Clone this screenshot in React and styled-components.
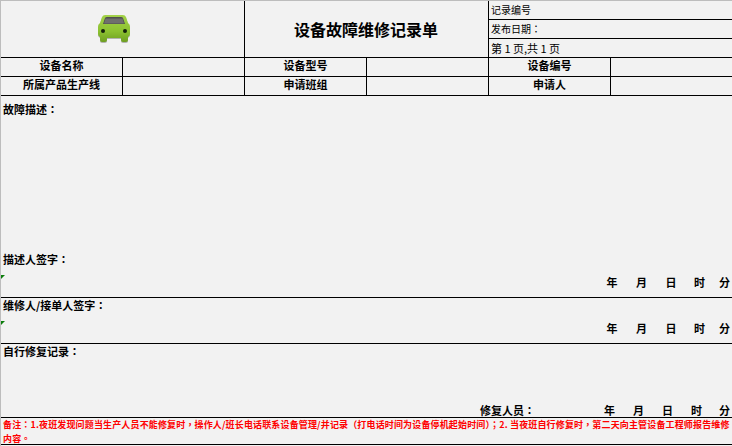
import React from 'react'
import styled, { createGlobalStyle } from 'styled-components'

const Global = createGlobalStyle`
html, body { margin: 0; padding: 0; background: #f2f2f2; }
body { font-family: "Noto Sans CJK SC", "Liberation Sans", sans-serif; color: #000; }
`

const Sheet = styled.div`
position: relative;
width: 732px;
height: 446px;
box-sizing: border-box;
overflow: hidden;
background: #f2f2f2;
border-top: 1px solid #bdbdbd;
border-left: 1px solid #bdbdbd;
display: flex;
flex-direction: column;
`

const Head = styled.div`
display: grid;
grid-template-columns: repeat(5, 122px) 121px;
grid-template-rows: 57px 19px 19px;
flex: none;
`

const Cell = styled.div`
box-sizing: border-box;
display: flex;
align-items: center;
justify-content: center;
padding-bottom: 3px;
border-bottom: 1px solid #000;
border-right: ${p => (p.$last ? 'none' : '1px solid #000')};
font-size: 11px;
font-weight: 700;
line-height: 1;
white-space: nowrap;
`

const LogoCell = styled(Cell)`
grid-column: span 2;
padding: 0 17px 1px 0;
`

const TitleCell = styled(Cell)`
grid-column: span 2;
padding: 0 1px 0 0;
font-size: 16px;
`

const MetaCell = styled.div`
grid-column: span 2;
display: grid;
grid-template-rows: 19px 19px 19px;
border-bottom: 1px solid #000;
box-sizing: border-box;
`

const MetaRow = styled.div`
box-sizing: border-box;
display: flex;
align-items: center;
padding-left: 2px;
font-size: ${p => (p.$big ? '11px' : '10px')};
line-height: 1;
white-space: pre;
border-bottom: ${p => (p.$last ? 'none' : '1px solid #000')};
`

const Section = styled.section`
box-sizing: border-box;
height: ${p => p.$h}px;
flex: none;
display: flex;
flex-direction: column;
justify-content: space-between;
padding: ${p => p.$pt || 0}px 2px ${p => p.$pb || 0}px 2px;
border-bottom: 1px solid #000;
`

const Label = styled.div`
font-size: 11px;
font-weight: 700;
line-height: 14px;
height: 14px;
white-space: nowrap;
`

const SignBlock = styled.div`
display: flex;
flex-direction: column;
gap: 9px;
`

const DateRow = styled.div`
display: flex;
justify-content: flex-end;
align-items: center;
font-size: 11px;
font-weight: 700;
line-height: 14px;
height: 14px;
`

const DatePart = styled.span`
display: block;
margin-left: ${p => p.$gap}px;
`

const Repairer = styled.span`
margin-right: 69px;
`

// full-width marks sit in the middle of their box in the reference
const Punct = styled.span`
font-family: "Noto Sans CJK TC", "Noto Sans CJK SC", sans-serif;
`

const Note = styled.div`
box-sizing: border-box;
height: 27px;
flex: none;
width: 731px;
padding: 0 0 0 2px;
font-family: "Noto Sans CJK TC", "Noto Sans CJK SC", sans-serif;
font-size: 9px;
font-weight: 700;
line-height: 14px;
color: #ff0000;
border-bottom: 1px solid #000;
letter-spacing: 0.15px;
`

const ScrollMark = styled.div`
position: absolute;
left: -1px;
top: 190px;
width: 1px;
height: 31px;
background: #2fa83a;
`

const Corner = styled.div`
position: absolute;
left: 0;
top: ${p => p.$top}px;
width: 0;
height: 0;
border-top: 4px solid #0a7d0a;
border-right: 4px solid transparent;
`

const CarWrap = styled.svg`
display: block;
filter: blur(0.4px);
`

const Car = () => (
  <CarWrap width="34" height="31" viewBox="-1 -1 34 31">
    <defs>
      <linearGradient id="carBody" x1="0" y1="0" x2="0" y2="1">
        <stop offset="0" stopColor="#a4d24a" />
        <stop offset="0.6" stopColor="#8cc230" />
        <stop offset="1" stopColor="#6f9f22" />
      </linearGradient>
    </defs>
    <path d="M7 1 h18 q2 0 3 2 l2 6 q2 1 2 4 v7 q0 2-2 3 v3 q0 2-2 2 h-3 q-2 0-2-2 v-2 H9 v2 q0 2-2 2 h-3 q-2 0-2-2 v-3 q-2-1-2-3 v-7 q0-3 2-4 l2-6 q1-2 3-2 z" fill="#7c8078" opacity=".55" transform="translate(0 1)" />
    <path d="M7 1 h18 q2 0 3 2 l2 6 q2 1 2 4 v7 q0 2-2 3 v3 q0 2-2 2 h-3 q-2 0-2-2 v-2 H9 v2 q0 2-2 2 h-3 q-2 0-2-2 v-3 q-2-1-2-3 v-7 q0-3 2-4 l2-6 q1-2 3-2 z" fill="url(#carBody)" />
    <path d="M5 10 l2-6 q.5-1 2-1 h14 q1.500 0 2 1 l2 6 z" fill="#4f4f4d" />
    <path d="M6 9.500 l1.500-5 h17 l1.500 5 z" fill="#6f6f6d" />
    <circle cx="5" cy="17" r="2" fill="#14200a" />
    <circle cx="27" cy="17" r="2" fill="#14200a" />
  </CarWrap>
)

const Txt = ({ children }) => (
  <>
    {children.split(/([：])/).map((s, i) =>
      i % 2 ? <Punct key={i}>{s}</Punct> : s
    )}
  </>
)

const signGaps = [0, 18.5, 18.5, 17.5, 14]
const repairGaps = [0, 18, 18, 18, 17]

const Dates = ({ gaps }) => (
  <>
    {['年', '月', '日', '时', '分'].map((t, i) => (
      <DatePart key={t} $gap={gaps[i]}>{t}</DatePart>
    ))}
  </>
)

const App = () => (
  <>
    <Global />
    <Sheet>
      <Head>
        <LogoCell><Car /></LogoCell>
        <TitleCell>设备故障维修记录单</TitleCell>
        <MetaCell>
          <MetaRow>记录编号</MetaRow>
          <MetaRow><Txt>发布日期：</Txt></MetaRow>
          <MetaRow $big $last>第 1 页,共 1 页</MetaRow>
        </MetaCell>
        <Cell>设备名称</Cell>
        <Cell />
        <Cell>设备型号</Cell>
        <Cell />
        <Cell>设备编号</Cell>
        <Cell $last />
        <Cell>所属产品生产线</Cell>
        <Cell />
        <Cell>申请班组</Cell>
        <Cell />
        <Cell>申请人</Cell>
        <Cell $last />
      </Head>
      <Section $h={202} $pt={6} $pb={8}>
        <Label><Txt>故障描述：</Txt></Label>
        <SignBlock>
          <Label><Txt>描述人签字：</Txt></Label>
          <DateRow><Dates gaps={signGaps} /></DateRow>
        </SignBlock>
      </Section>
      <Section $h={46} $pb={8}>
        <Label><Txt>维修人/接单人签字：</Txt></Label>
        <DateRow><Dates gaps={signGaps} /></DateRow>
      </Section>
      <Section $h={74}>
        <Label><Txt>自行修复记录：</Txt></Label>
        <DateRow>
          <Repairer><Txt>修复人员：</Txt></Repairer>
          <Dates gaps={repairGaps} />
        </DateRow>
      </Section>
      <Note>备注：1.夜班发现问题当生产人员不能修复时，操作人/班长电话联系设备管理/并记录（打电话时间为设备停机起始时间）；2. 当夜班自行修复时，第二天向主管设备工程师报告维修内容。</Note>
      <ScrollMark />
      <Corner $top={274} />
      <Corner $top={320} />
    </Sheet>
  </>
)

export default App
